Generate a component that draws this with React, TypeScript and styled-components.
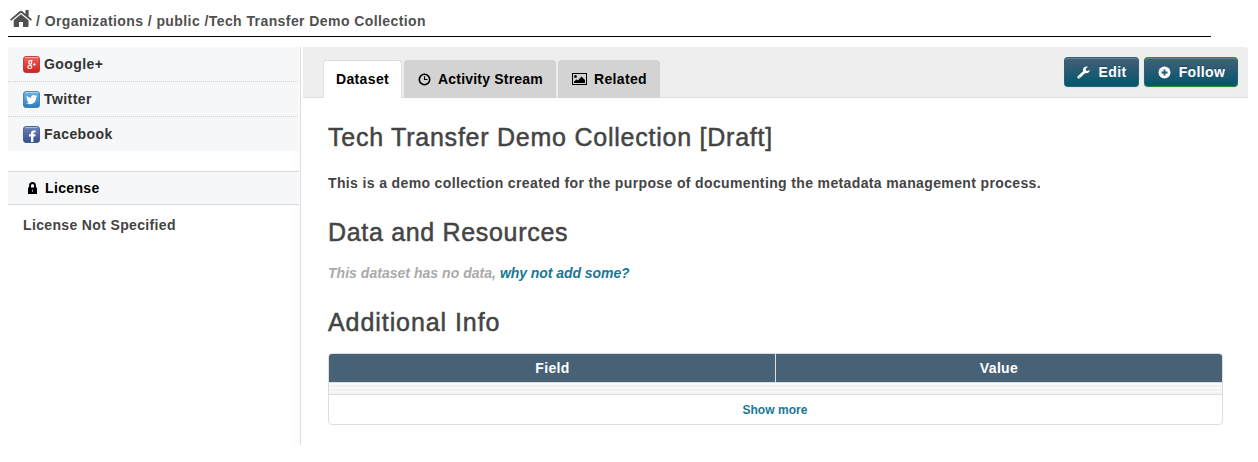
import React from 'react';
import styled, { createGlobalStyle } from 'styled-components';

const Global = createGlobalStyle`
  * { box-sizing: border-box; }
  body {
    margin: 0;
    background: #fff;
    color: #444;
    font: bold 14px/20px "Liberation Sans", Arial, sans-serif;
    letter-spacing: 0.35px;
  }
  a { color: inherit; text-decoration: none; }
  h1, h2, p { margin: 0; }
`;

const Page = styled.div`
  width: 1240px;
  margin-left: 8px;
`;

const Breadcrumb = styled.nav`
  display: flex;
  width: 1203px;
  height: 37px;
  padding-top: 9px;
  border-bottom: 1px solid #000;
  color: #505050;
  letter-spacing: 0.42px;
  white-space: pre;
  svg { margin: 0 4px 0 2px; }
  span { padding-top: 2px; }
`;

const Columns = styled.div`
  display: flex;
  margin-top: 10px;
  height: 398px;
`;

const Sidebar = styled.aside`
  width: 293px;
  border-right: 1px solid #ddd;
  background: linear-gradient(to left, #fafafa, #fff 8px);
`;

const ShareList = styled.ul`
  list-style: none;
  margin: 0 2px 20px 0;
  padding: 0;
  background: #f6f7f9;
`;

const ShareItem = styled.li`
  display: flex;
  align-items: center;
  height: 35px;
  padding-left: 15px;
  gap: 4px;
  color: #333;
  letter-spacing: 0.42px;
  border-bottom: 1px dotted #d4d4d4;
  &:last-child { height: 34px; border-bottom: 0; }
`;

const SideHeading = styled.h2`
  display: flex;
  align-items: center;
  height: 34px;
  margin-right: 1px;
  padding-left: 20px;
  gap: 8px;
  font-size: 14px;
  color: #000;
  background: #f6f7f9;
  border: solid #ddd;
  border-width: 1px 0;
`;

const SideText = styled.p`
  padding: 10px 15px;
`;

const Main = styled.main`
  flex: 1;
  margin-left: 2px;
`;

const TabBar = styled.header`
  display: flex;
  justify-content: space-between;
  height: 51px;
  padding: 10px 10px 0 20px;
  background: #eee;
  border-bottom: 1px solid #ddd;
  border-radius: 0 3px 0 0;
`;

const Tabs = styled.div`
  display: flex;
  gap: 2px;
  margin-top: 3px;
  height: 38px;
`;

const Tab = styled.a<{ $active?: boolean; $width: number; $spacing?: number }>`
  display: flex;
  align-items: center;
  gap: 7px;
  width: ${p => p.$width}px;
  padding: 0 0 1px ${p => (p.$active ? 12 : 13)}px;
  color: #000;
  letter-spacing: ${p => p.$spacing ?? 0.35}px;
  white-space: nowrap;
  background: ${p => (p.$active ? '#fff' : '#d3d3d3')};
  border: 1px solid ${p => (p.$active ? '#ddd' : '#d3d3d3')};
  border-bottom: 0;
  border-radius: 4px 4px 0 0;
`;

const Actions = styled.div`
  display: flex;
  gap: 5px;
`;

const Button = styled.a<{ $edge: string; $width: number }>`
  display: flex;
  align-items: center;
  justify-content: center;
  gap: 8px;
  width: ${p => p.$width}px;
  height: 30px;
  padding-left: 1px;
  color: #fff;
  letter-spacing: 0.4px;
  text-shadow: 0 -1px 0 rgba(0, 0, 0, 0.25);
  background: linear-gradient(#465f76, #00566d) padding-box, ${p => p.$edge} border-box;
  border: 1px solid transparent;
  border-radius: 4px;
  box-shadow: inset 0 1px 0 rgba(255, 255, 255, 0.2), 0 1px 2px rgba(0, 0, 0, 0.05);
`;

const Content = styled.section`
  padding: 23px 25px 0;
`;

const Title = styled.h1<{ $gap: number; $spacing: number }>`
  font-size: 25px;
  line-height: 32px;
  font-weight: normal;
  letter-spacing: ${p => p.$spacing}px;
  margin-bottom: ${p => p.$gap}px;
  -webkit-text-stroke: 0.5px #444;
`;

const Description = styled.p`
  margin-bottom: 23px;
  letter-spacing: 0.365px;
`;

const Empty = styled.p`
  margin-bottom: 23px;
  font-style: italic;
  letter-spacing: 0.03px;
  color: #aaa;
  a { color: #187794; letter-spacing: -0.06px; }
`;

const InfoTable = styled.div`
  width: 895px;
  height: 72px;
  border: 1px solid #ddd;
  border-radius: 4px;
  overflow: hidden;
`;

const HeadRow = styled.div`
  display: grid;
  grid-template-columns: 447px 1fr;
  height: 29px;
  line-height: 29px;
  text-align: center;
  color: #fff;
  background: #476176;
  border-bottom: 1px solid #ddd;
  div + div { border-left: 1px solid #ddd; margin-left: -1px; }
`;

const EmptyRow = styled.div`
  height: 4px;
  background: linear-gradient(#fefefe, #ededed);
  &:nth-child(4) { height: 3px; }
`;

const ShowMore = styled.div`
  border-top: 1px solid #ddd;
  padding-right: 1px;
  text-align: center;
  font-size: 12px;
  line-height: 30px;
  letter-spacing: 0.05px;
  color: #187794;
`;

const HomeIcon = () => (
  <svg width="22" height="19" viewBox="0 0 22 19" fill="#505050">
    <path d="M11 5.2 18.5 11.3V17.2Q18.5 18 17.7 18H13V13H9V18H4.5Q3.7 18 3.7 17.2V11.3Z" />
    <path d="M0 10.5 9.7 2.3Q11 1.3 12.3 2.3L15.5 5V1H18.6V7.6L22 10.5 20.9 11.7 11 3.7 1.1 11.7Z" />
  </svg>
);

const tiles: Record<string, [string, string, string]> = {
  google: ['#f0635a', '#d5201f', '#b81d1d'],
  twitter: ['#6db3e2', '#2a7fc4', '#2d6ea8'],
  facebook: ['#6c82b8', '#324f8f', '#304a86'],
};

const ShareIcon = ({ kind }: { kind: string }) => (
  <svg width="17" height="17" viewBox="0 0 17 17">
    <defs>
      <linearGradient id={kind} x2="0" y2="1">
        <stop stopColor={tiles[kind][0]} />
        <stop offset="1" stopColor={tiles[kind][1]} />
      </linearGradient>
    </defs>
    <rect x=".5" y=".5" width="16" height="16" rx="2.5" fill={`url(#${kind})`} stroke={tiles[kind][2]} strokeOpacity=".75" />
    <path d="M2 1.6H15" stroke="#fff" strokeOpacity=".5" />
    {kind === 'google' && (
      <g fill="none" stroke="#fff" strokeWidth="1.2">
        <ellipse cx="7.2" cy="6.4" rx="1.5" ry="1.7" />
        <ellipse cx="6.8" cy="11" rx="2" ry="1.5" />
        <path d="M7.5 4.5H9.5M7.2 8 8.4 9.8M9.9 8.5H12.7M11.3 7.1V9.9" strokeWidth=".9" />
      </g>
    )}
    {kind === 'twitter' && (
      <path fill="#fff" d="M3.5 4.5Q5.5 6.8 8.2 6.8 8 4 10.5 4 11.6 4 12.2 4.7L14 4.3 13.2 5.8 14.3 5.6 13 7Q13 11 9.8 12.5 6.3 14 3 12 5 12 6.2 11.2 4.5 10.8 4 9.4H5Q3.4 8.6 3.4 7L4.4 7.2Q3 6 3.5 4.5Z" />
    )}
    {kind === 'facebook' && (
      <path fill="#fff" d="M8 16V10.5H6V8.3H8V6.9Q8 4.4 10.6 4.4H12.6V6.6H11.3Q10.4 6.6 10.4 7.4V8.3H12.6L12.3 10.5H10.4V16Z" />
    )}
  </svg>
);

const LockIcon = () => (
  <svg width="9" height="13" viewBox="0 0 9 13">
    <path d="M2 6V3.6Q2 1 4.5 1T7 3.6V6" fill="none" stroke="#000" strokeWidth="1.9" />
    <path d="M0 5.5H9V12H0Z" />
    <path d="M4.5 7.5V10" stroke="#bbb" strokeWidth=".8" />
  </svg>
);

const ClockIcon = () => (
  <svg width="13" height="13" viewBox="0 0 13 13" fill="none" stroke="#000">
    <circle cx="6.5" cy="6.5" r="5.2" strokeWidth="1.6" />
    <path d="M6.5 3.2V6.5H9.5" strokeWidth="1.1" />
  </svg>
);

const ImageIcon = () => (
  <svg width="15" height="12" viewBox="0 0 15 12">
    <rect x=".5" y=".5" width="14" height="11" fill="none" stroke="#000" />
    <rect x="2.2" y="2.2" width="2.5" height="2.5" rx=".5" />
    <path d="M2 10V8.5L4.5 6.5 6 7.5 9.5 3.5 13 7V10Z" />
  </svg>
);

const WrenchIcon = () => (
  <svg width="13" height="13" viewBox="0 0 13 13">
    <path d="M1.7 11.3 7 6.2" stroke="#fff" strokeWidth="2.7" strokeLinecap="round" />
    <path d="M11.1.7Q7.5-.3 6.2 2.5 5.3 5.6 7.8 7.1 11.6 8 13 4L10.5 5.1 8.8 4.3 8.9 2.4Z" fill="#fff" />
    <circle cx="2" cy="11" r=".6" fill="#24596f" />
  </svg>
);

const PlusIcon = () => (
  <svg width="13" height="13" viewBox="0 0 13 13">
    <circle cx="6.5" cy="6.5" r="6" fill="#fff" />
    <path d="M6.5 3.5V9.5M3.5 6.5H9.5" stroke="#235a70" strokeWidth="1.8" />
  </svg>
);

export default function App() {
  return (
    <Page>
      <Global />
      <Breadcrumb>
        <HomeIcon />
        <span>/ <a href="#">Organizations</a> / <a href="#">public</a> /<a href="#">Tech Transfer Demo Collection</a></span>
      </Breadcrumb>
      <Columns>
        <Sidebar>
          <ShareList>
            <ShareItem><ShareIcon kind="google" />Google+</ShareItem>
            <ShareItem><ShareIcon kind="twitter" />Twitter</ShareItem>
            <ShareItem><ShareIcon kind="facebook" />Facebook</ShareItem>
          </ShareList>
          <SideHeading><LockIcon />License</SideHeading>
          <SideText>License Not Specified</SideText>
        </Sidebar>
        <Main>
          <TabBar>
            <Tabs>
              <Tab $active $width={79}>Dataset</Tab>
              <Tab $width={152} $spacing={0.2}><ClockIcon />Activity Stream</Tab>
              <Tab $width={102}><ImageIcon />Related</Tab>
            </Tabs>
            <Actions>
              <Button $edge="linear-gradient(#2b6076, #2b6076)" $width={75}><WrenchIcon />Edit</Button>
              <Button $edge="linear-gradient(#2f8a35 1px, #2b6076 5px, #2b6076 25px, #2f8a35 29px)" $width={94}><PlusIcon />Follow</Button>
            </Actions>
          </TabBar>
          <Content>
            <Title $gap={20} $spacing={0.76}>Tech Transfer Demo Collection [Draft]</Title>
            <Description>This is a demo collection created for the purpose of documenting the metadata management process.</Description>
            <Title $gap={15} $spacing={0.68}>Data and Resources</Title>
            <Empty>This dataset has no data, <a href="#">why not add some?</a></Empty>
            <Title $gap={15} $spacing={0.93}>Additional Info</Title>
            <InfoTable>
              <HeadRow><div>Field</div><div>Value</div></HeadRow>
              <EmptyRow /><EmptyRow /><EmptyRow />
              <ShowMore>Show more</ShowMore>
            </InfoTable>
          </Content>
        </Main>
      </Columns>
    </Page>
  );
}
